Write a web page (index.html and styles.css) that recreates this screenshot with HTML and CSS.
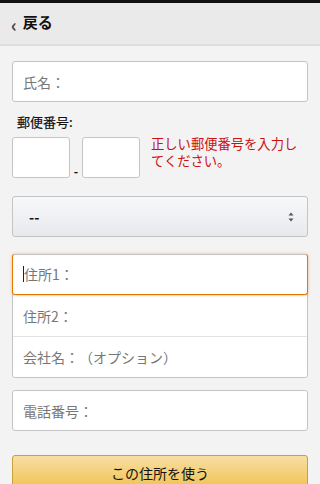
FILE: index.html
```html
<!DOCTYPE html>
<html lang="ja">
<head>
    <meta charset="UTF-8">
    <meta name="viewport" content="width=device-width, initial-scale=1.0">
    <title>住所の追加</title>
    <link rel="stylesheet" href="styles.css">
</head>
<body>
    <div class="topbar"></div>
    <div class="header">
        <a class="back" href="#"><span class="chev">&lsaquo;</span>戻る</a>
    </div>

    <form class="form">
        <input class="field" type="text" placeholder="氏名：">

        <label class="label">郵便番号:</label>
        <div class="zip-row">
            <input class="zip" type="text">
            <span class="dash">-</span>
            <input class="zip" type="text">
            <p class="error">正しい郵便番号を入力してください。</p>
        </div>

        <div class="select">
            <span>--</span>
            <svg class="arrows" width="8" height="12" viewBox="0 0 8 12">
                <path d="M4 1.5 L6.5 4.5 H1.5 Z" fill="#555"/>
                <path d="M4 10.5 L6.5 7.5 H1.5 Z" fill="#555"/>
            </svg>
        </div>

        <div class="group">
            <div class="row focused"><span class="caret"></span>住所1：</div>
            <div class="row">住所2：</div>
            <div class="row">会社名：（オプション）</div>
        </div>

        <input class="field phone" type="text" placeholder="電話番号：">

        <button class="submit" type="button">この住所を使う</button>
    </form>
</body>
</html>
```

FILE: styles.css
```css
body {
    margin: 0;
    background: #f3f3f3;
    font-family: "Noto Sans CJK JP", "Noto Sans", sans-serif;
    color: #111;
    text-spacing-trim: space-all;
}
.topbar {
    height: 3px;
    background: #111;
}
.header {
    height: 41px;
    background: #eaeaea;
    border-bottom: 2px solid #dedede;
    display: flex;
    align-items: center;
    padding-left: 11px;
}
.back {
    color: #111;
    text-decoration: none;
    font-size: 15px;
    font-weight: bold;
    line-height: 20px;
    display: flex;
    align-items: center;
    margin-top: -4px;
}
.chev {
    font-size: 18px;
    color: #444;
    margin-right: 6px;
    margin-top: 4px;
}
.form {
    padding: 15px 12px 0 12px;
    display: flex;
    flex-direction: column;
}
.field {
    box-sizing: border-box;
    height: 41px;
    width: 100%;
    border: 1px solid #c4c4c4;
    border-radius: 3px;
    background: #fff;
    padding: 0 10px;
    font-family: inherit;
    font-size: 14px;
}
.field::placeholder {
    color: #777;
}
.label {
    font-size: 13px;
    line-height: 18px;
    margin: 11px 0 6px 5px;
    color: #111;
    -webkit-text-stroke: 0.2px #111;
}
.zip-row {
    display: flex;
    align-items: flex-start;
}
.zip {
    box-sizing: border-box;
    width: 58px;
    height: 41px;
    border: 1px solid #c4c4c4;
    border-radius: 3px;
    background: #fff;
}
.dash {
    height: 41px;
    width: 12px;
    display: flex;
    align-items: flex-end;
    justify-content: center;
    font-size: 12px;
    font-weight: bold;
    line-height: 12px;
    padding-bottom: 1px;
    box-sizing: border-box;
}
.error {
    margin: -2px 0 0 11px;
    color: #cc1111;
    font-size: 13.3px;
    line-height: 17px;
    width: 150px;
}
.select {
    box-sizing: border-box;
    height: 41px;
    margin-top: 18px;
    border: 1px solid #c4c4c4;
    border-radius: 3px;
    background: linear-gradient(#f7f8fa, #e7e9ec);
    display: flex;
    align-items: center;
    justify-content: space-between;
    padding: 0 12px 0 16px;
    font-size: 14px;
    font-weight: bold;
}
.group {
    margin-top: 17px;
    border: 1px solid #c4c4c4;
    border-radius: 3px;
    background: #fff;
}
.row {
    height: 40px;
    display: flex;
    align-items: center;
    padding: 0 10px;
    font-size: 14px;
    color: #777;
    border-top: 1px solid #e2e2e2;
}
.row:first-child {
    border-top: none;
}
.focused {
    margin: -1px -1px 0 -1px;
    border: 1px solid #e77600;
    border-radius: 3px;
    box-shadow: 0 0 3px rgba(228, 121, 17, 0.5);
}
.caret {
    width: 1px;
    height: 16px;
    background: #222;
}
.phone {
    margin-top: 12px;
}
.submit {
    margin-top: 24px;
    height: 36px;
    border: 1px solid #c8a03c;
    border-radius: 3px;
    background: linear-gradient(#f7dfa5, #f0c14b);
    font-family: inherit;
    font-size: 14px;
    color: #111;
    text-spacing-trim: space-all;
}
```
